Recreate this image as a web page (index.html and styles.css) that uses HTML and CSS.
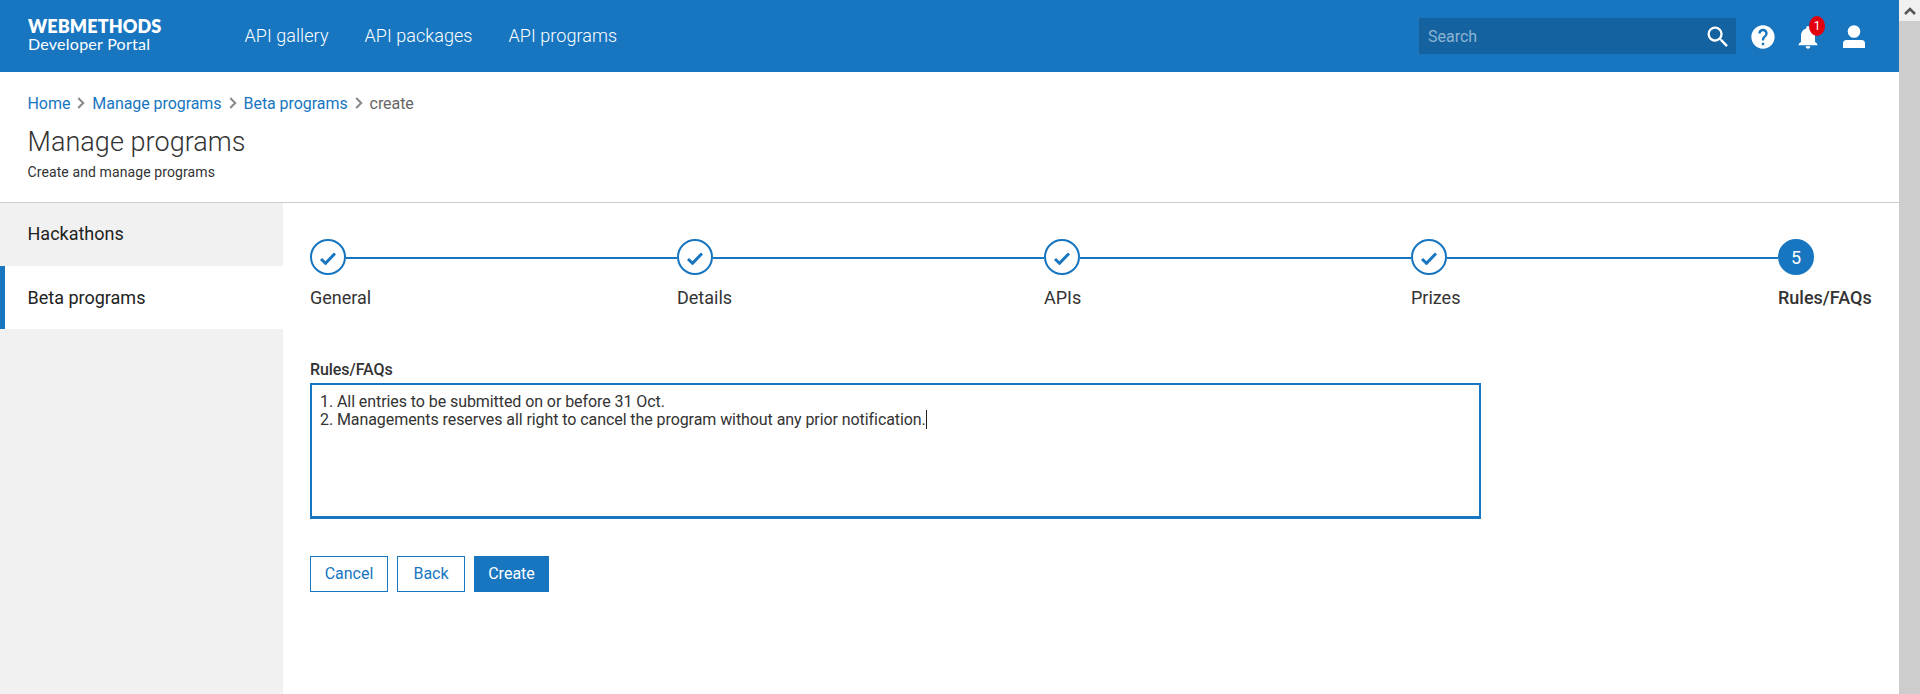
FILE: index.html
```html
<!DOCTYPE html>
<html lang="en">
<head>
<meta charset="utf-8">
<title>Developer Portal</title>
<link rel="stylesheet" href="styles.css">
</head>
<body>
<div class="page">
  <header class="topbar">
    <div class="brand">
      <span class="brand-name">WEBMETHODS</span>
      <span class="brand-sub">Developer Portal</span>
    </div>
    <nav class="nav">
      <a>API gallery</a>
      <a>API packages</a>
      <a>API programs</a>
    </nav>
    <div class="search">
      <span>Search</span>
      <svg class="icon" viewBox="0 0 24 24"><path d="M15.5 14h-.79l-.28-.27A6.47 6.47 0 0 0 16 9.5 6.5 6.5 0 1 0 9.5 16c1.61 0 3.09-.59 4.23-1.57l.27.28v.79l5 4.99L20.49 19l-4.99-5zm-6 0C7.01 14 5 11.99 5 9.5S7.01 5 9.5 5 14 7.01 14 9.5 11.99 14 9.5 14z"/></svg>
    </div>
    <div class="actions">
      <svg class="icon" viewBox="0 0 24 24"><path d="M12 2C6.48 2 2 6.48 2 12s4.480 10 10 10 10-4.480 10-10S17.520 2 12 2zm1 17h-2v-2h2v2zm2.070-7.750l-.9.920C13.450 12.900 13 13.500 13 15h-2v-.5c0-1.100.45-2.100 1.170-2.830l1.240-1.260c.37-.36.59-.86.59-1.410 0-1.100-.9-2-2-2s-2 .9-2 2H8c0-2.210 1.790-4 4-4s4 1.790 4 4c0 .88-.36 1.680-.93 2.250z"/></svg>
      <div class="bell">
        <svg class="icon" viewBox="0 0 24 24"><path d="M12 22c1.100 0 2-.9 2-2h-4c0 1.100.89 2 2 2zm6-6v-5c0-3.070-1.640-5.640-4.500-6.320V4c0-.83-.67-1.500-1.500-1.500s-1.500.67-1.500 1.500v.68C7.630 5.360 6 7.920 6 11v5l-2 2v1h16v-1l-2-2z"/></svg>
        <span class="badge">1</span>
      </div>
      <svg class="user" viewBox="0 0 22 23"><circle cx="11" cy="6.500" r="6.300"/><path d="M0 23v-4.500A3.500 3.500 0 0 1 3.500 15h15a3.500 3.500 0 0 1 3.500 3.500V23z"/></svg>
    </div>
  </header>

  <section class="intro">
    <div class="crumbs">
      <a>Home</a>
      <svg viewBox="0 0 8 12"><path d="M1.200 1l5 5-5 5"/></svg>
      <a>Manage programs</a>
      <svg viewBox="0 0 8 12"><path d="M1.200 1l5 5-5 5"/></svg>
      <a>Beta programs</a>
      <svg viewBox="0 0 8 12"><path d="M1.200 1l5 5-5 5"/></svg>
      <span>create</span>
    </div>
    <h1>Manage programs</h1>
    <p>Create and manage programs</p>
  </section>

  <div class="body">
    <aside class="side">
      <a class="side-item">Hackathons</a>
      <a class="side-item active">Beta programs</a>
    </aside>
    <main class="main">
      <ol class="steps">
        <li class="step">
          <span class="track"><span class="dot"><svg viewBox="0 0 16 13"><path d="M1 7l4.500 4.300L15 1.500"/></svg></span></span>
          <span class="label">General</span>
        </li>
        <li class="step">
          <span class="track"><span class="dot"><svg viewBox="0 0 16 13"><path d="M1 7l4.500 4.300L15 1.500"/></svg></span></span>
          <span class="label">Details</span>
        </li>
        <li class="step">
          <span class="track"><span class="dot"><svg viewBox="0 0 16 13"><path d="M1 7l4.500 4.300L15 1.500"/></svg></span></span>
          <span class="label">APIs</span>
        </li>
        <li class="step">
          <span class="track"><span class="dot"><svg viewBox="0 0 16 13"><path d="M1 7l4.500 4.300L15 1.500"/></svg></span></span>
          <span class="label">Prizes</span>
        </li>
        <li class="step current">
          <span class="track"><span class="dot">5</span></span>
          <span class="label">Rules/FAQs</span>
        </li>
      </ol>
      <div class="field-label">Rules/FAQs</div>
      <div class="editor">
        <div>1. All entries to be submitted on or before 31 Oct.</div>
        <div class="line">2. Managements reserves all right to cancel the program without any prior notification.<span class="caret"></span></div>
      </div>
      <div class="buttons">
        <span class="btn cancel">Cancel</span>
        <span class="btn back">Back</span>
        <span class="btn create">Create</span>
      </div>
    </main>
  </div>
</div>
<div class="scrollbar">
  <div class="scroll-up"><svg viewBox="0 0 12 8"><path d="M1 7l5-5 5 5"/></svg></div>
</div>
</body>
</html>
```

FILE: styles.css
```css
* { box-sizing: border-box; }

body {
  margin: 0;
  height: 694px;
  display: flex;
  overflow: hidden;
  background: #fff;
  color: #333;
  font-family: Roboto, sans-serif;
  font-size: 16px;
}

.page { width: 1899px; display: flex; flex-direction: column; }

/* Top bar */
.topbar {
  height: 72px;
  background: #1776bf;
  color: #fff;
  display: flex;
  align-items: center;
  padding: 0 34px 0 28px;
}
.brand {
  width: 216.5px;
  padding-bottom: 4px;
  display: flex;
  flex-direction: column;
  font-family: Lato, sans-serif;
  white-space: nowrap;
}
.brand-name { font-size: 18px; font-weight: 800; line-height: 18px; letter-spacing: 0.1px; }
.brand-sub { font-size: 16px; line-height: 17px; letter-spacing: 0.25px; }
.nav { display: flex; gap: 36px; font-size: 18px; font-weight: 300; line-height: 24px; letter-spacing: 0.06px; white-space: nowrap; }
.search {
  margin-left: auto;
  width: 317px;
  height: 36px;
  padding: 0 4px 0 9px;
  background: #14629f;
  color: #8db4d3;
  display: flex;
  align-items: center;
  justify-content: space-between;
}
.search .icon { margin-top: 2px; }
.icon { width: 28px; height: 28px; fill: #fff; display: block; }
.actions { margin-left: 13px; padding-top: 1px; display: flex; align-items: center; gap: 17px; }
.actions .user { width: 22px; height: 23px; fill: #fff; margin-left: 4px; }
.bell { position: relative; }
.badge {
  position: absolute;
  left: 15px;
  top: -7px;
  width: 16px;
  height: 20px;
  border-radius: 50%;
  background: #e2000f;
  font-size: 12px;
  line-height: 20px;
  text-align: center;
}

/* Page heading */
.intro { height: 131px; padding: 19px 27.5px 0; border-bottom: 1px solid #ccc; }
.crumbs { display: flex; align-items: center; height: 24px; color: #666; letter-spacing: -0.06px; }
.crumbs a { color: #1776bf; }
.crumbs svg { width: 8px; height: 12px; margin: 0 7px; fill: none; stroke: #888; stroke-width: 2; }
.intro h1 { margin: 10px 0 0; font-size: 27px; font-weight: 300; line-height: 34px; letter-spacing: 0.05px; }
.intro p { margin: 3px 0 0; font-size: 14px; line-height: 20px; letter-spacing: 0.1px; }

/* Body */
.body { flex: 1; display: flex; }
.side { width: 283px; background: #f1f1f1; display: flex; flex-direction: column; }
.side-item {
  height: 63px;
  padding-left: 27.5px;
  font-size: 18px;
  line-height: 62px;
  color: #222;
}
.side-item.active { line-height: 63px; background: #fff; border-left: 5px solid #1776bf; padding-left: 22.5px; }
.main { flex: 1; padding: 36px 27px 0; }

.steps { list-style: none; margin: 0; padding: 0; display: flex; }
.step { width: 367px; }
.step.current { width: 94px; }
.track { display: flex; align-items: center; }
.track::after { content: ""; flex: 1; height: 2px; margin-top: 2px; background: #1776bf; }
.current .track::after { display: none; }
.dot {
  width: 36px;
  height: 36px;
  border: 2px solid #1776bf;
  border-radius: 50%;
  display: flex;
  align-items: center;
  justify-content: center;
}
.dot svg { width: 16px; height: 13px; margin-top: 2px; fill: none; stroke: #1776bf; stroke-width: 3; }
.current .dot { background: #1776bf; color: #fff; font-size: 18px; }
.label { display: block; margin-top: 11px; font-size: 18px; line-height: 24px; white-space: nowrap; }
.current .label { font-weight: 500; }

.field-label { margin-top: 50px; font-weight: 500; line-height: 20px; letter-spacing: -0.07px; }
.editor {
  width: 1171px;
  height: 136px;
  margin-top: 3px;
  padding: 8px;
  border: 2px solid #1776bf;
  border-bottom-width: 3px;
  line-height: 18px;
  letter-spacing: -0.075px;
}
.line { display: flex; }
.caret { width: 1px; height: 19px; margin-top: -1px; background: #222; }

.buttons { display: flex; gap: 9px; margin-top: 37px; }
.btn { height: 36px; border: 1px solid #1776bf; color: #1776bf; line-height: 33px; text-align: center; }
.cancel { width: 78px; }
.back { width: 68px; }
.create { width: 75px; background: #1776bf; color: #fff; }

/* Window scrollbar */
.scrollbar { width: 21px; background: #cdcdcd; }
.scroll-up { height: 21px; background: #f0f0f0; display: flex; align-items: center; justify-content: center; }
.scroll-up svg { width: 12px; height: 8px; fill: none; stroke: #555; stroke-width: 2.500; }
```
